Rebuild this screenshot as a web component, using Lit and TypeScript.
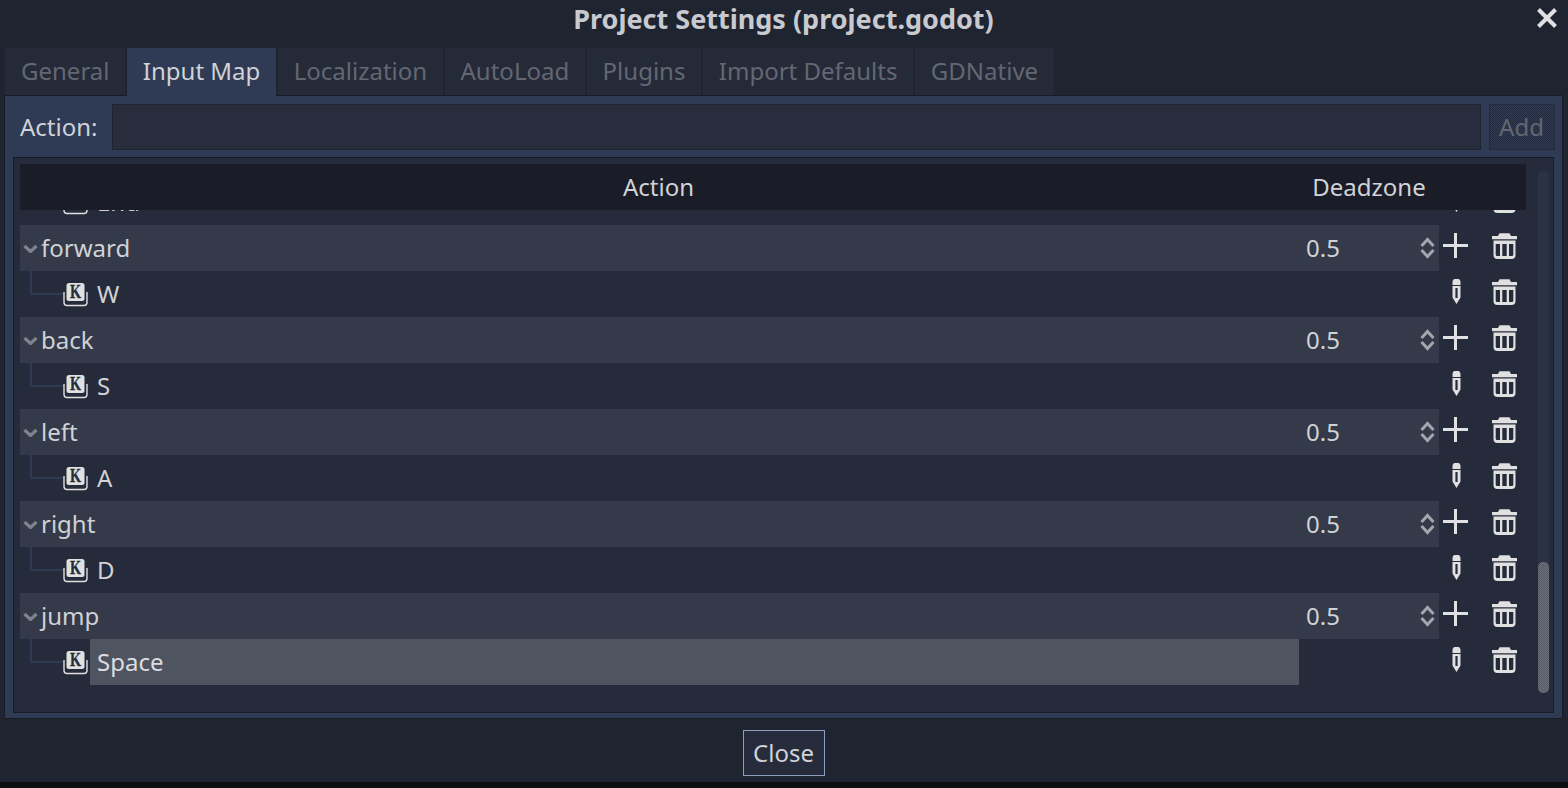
import { LitElement, html, css, svg } from "lit";
import { customElement } from "lit/decorators.js";

const plusIcon = html`<svg class="ico plus" viewBox="0 0 25 25"><path d="M11 0h3v11h11v3H14v11h-3V14H0v-3h11z" fill="#e0e0e0"/></svg>`;
const trashIcon = html`<svg class="ico trash" viewBox="0 0 25 26"><path fill="#e0e0e0" d="M7.500 0.300h10l1.500 2.700h6v3.300H0V3h6zM1.500 7.500h22v14.500a4 4 0 0 1-4 4h-14a4 4 0 0 1-4-4z"/><path fill="#252b3a" d="M3.700 11h4.300v12H5.200a1.500 1.500 0 0 1-1.500-1.500zM10.300 11h4.400v12h-4.400zM17 11h4.300v10.500a1.500 1.500 0 0 1-1.500 1.500H17z"/></svg>`;
const pencilIcon = html`<svg class="ico pencil" viewBox="0 0 9 25"><path fill="#e0e0e0" d="M0.500 3a3.500 3 0 0 1 8 0v3h-8zM0.500 7h8v11.500L4.500 25l-4-6.500z"/><rect x="3.400" y="9" width="2.200" height="10" fill="#252b3a"/></svg>`;
const keyIcon = html`<svg class="ico key" viewBox="0 0 25 24"><path fill="none" stroke="#e0e0e0" stroke-width="1.400" d="M1 9v10.500a3 3 0 0 0 3 3h17a3 3 0 0 0 3-3V9"/><rect x="3.500" y="0" width="18" height="18" rx="2.500" fill="#e0e0e0"/>${svg`<text x="12.500" y="15.200" text-anchor="middle" font-family="'Liberation Serif', serif" font-weight="700" font-size="18.500" textLength="11" lengthAdjust="spacingAndGlyphs" stroke="#252b3a" stroke-width="0.300" fill="#252b3a">K</text>`}</svg>`;
const chevron = html`<svg class="chev" viewBox="0 -1 15 9"><path d="M1.500 1 7.500 6.500l6-5.500" fill="none" stroke="#7f838d" stroke-width="3.200"/></svg>`;
const spinner = html`<svg class="spin" viewBox="0 0 15 22"><path d="M1.500 9 7.500 2.500 13.500 9M1.500 13l6 6.500 6-6.500" fill="none" stroke="#a3a6ad" stroke-width="3"/></svg>`;

type Row = { name: string; key: string; selected?: boolean };
const rows: Row[] = [
  { name: "forward", key: "W" },
  { name: "back", key: "S" },
  { name: "left", key: "A" },
  { name: "right", key: "D" },
  { name: "jump", key: "Space", selected: true },
];
const tabs = ["General", "Input Map", "Localization", "AutoLoad", "Plugins", "Import Defaults", "GDNative"];

@customElement("app-root")
export class AppRoot extends LitElement {
  static styles = css`
    :host {
      display: flex;
      flex-direction: column;
      width: 1568px;
      height: 788px;
      overflow: hidden;
      background: #1f2431;
      color: #d0d2d6;
      font-family: "Noto Sans", sans-serif;
      font-size: 24px;
      line-height: 46px;
    }
    .title {
      position: relative;
      height: 48px;
      flex: none;
      display: flex;
      align-items: center;
      justify-content: center;
      line-height: 40px;
      font-size: 27px;
      font-weight: 700;
      color: #c8cad0;
      padding-bottom: 10px;
      padding-right: 1px;
      box-sizing: border-box;
    }
    .x {
      position: absolute;
      left: 1537px;
      top: 8px;
      width: 20px;
      height: 20px;
    }
    .tabs {
      flex: none;
      display: flex;
      height: 47px;
      padding-left: 5px;
      gap: 1.400px;
      position: relative;
      z-index: 1;
    }
    .tab {
      padding: 0 16px;
      height: 47px;
      line-height: 45px;
      box-sizing: border-box;
      background: #252a39;
      color: #636771;
      box-shadow: 0 -1px 0 #1f2431, 0 1px 0 #191c26;
    }
    .tab.on {
      background: #2f3a54;
      color: #d0d2d6;
      height: 48px;
      box-shadow: none;
    }
    .panel {
      flex: none;
      height: 624px;
      margin: 0 4px;
      width: 1559px;
      box-sizing: border-box;
      border: 1px solid #191c26;
      background: #2f3a54;
      padding: 8px 7px 5px 8px;
      display: flex;
      flex-direction: column;
      gap: 7px;
    }
    .bar {
      display: flex;
      height: 46px;
      flex: none;
    }
    .lbl {
      width: 99px;
      padding-left: 7px;
      box-sizing: border-box;
    }
    .input {
      width: 1369px;
      box-sizing: border-box;
      background: #272d3c;
      border: 1px solid #20242f;
    }
    .add {
      margin-left: 8px;
      width: 66px;
      box-sizing: border-box;
      text-align: center;
      line-height: 44px;
      padding-right: 1px;
      color: #636771;
      border: 1px solid #242a3a;
      background: repeating-conic-gradient(#252b3c 0 25%, #2f3a54 0 50%) 0 0 / 2px 2px;
    }
    .tree {
      flex: 1;
      margin-right: 1px;
      box-sizing: border-box;
      background: #252b3a;
      border: 1px solid #191c26;
      padding: 6px 4px 6px 6px;
      display: flex;
      gap: 12px;
      min-height: 0;
    }
    .main {
      width: 1506px;
      display: flex;
      flex-direction: column;
      min-height: 0;
    }
    .head,
    .row {
      display: grid;
      grid-template-columns: 1279px 140px 87px;
      height: 46px;
      flex: none;
    }
    .head {
      background: #1a1d28;
      text-align: center;
    }
    .head .first {
      padding-right: 2px;
    }
    .rows {
      flex: 1;
      overflow: hidden;
      min-height: 0;
    }
    .list {
      margin-top: -31px;
    }
    .cell {
      display: flex;
      align-items: center;
      position: relative;
      min-width: 0;
    }
    .row.parent .cell.a,
    .row.parent .cell.b {
      background: #343a4a;
    }
    .cell.a {
      padding-left: 3px;
      gap: 3px;
    }
    .row.child .cell.a {
      padding-left: 43px;
      gap: 4px;
    }
    .cell.b {
      padding-left: 7px;
      justify-content: space-between;
      padding-right: 4px;
      box-sizing: border-box;
    }
    .cell.c {
      display: block;
    }
    .chev {
      width: 15px;
      height: 9px;
      flex: none;
    }
    .spin {
      width: 15px;
      height: 22px;
      flex: none;
    }
    .ico {
      display: block;
      flex: none;
    }
    .key {
      width: 25px;
      height: 24px;
      margin-top: 2px;
      margin-right: -4px;
    }
    .plus {
      width: 25px;
      height: 25px;
    }
    .trash {
      width: 25px;
      height: 26px;
    }
    .pencil {
      width: 9px;
      height: 25px;
    }
    .btns {
      position: absolute;
      left: 0;
      top: 0;
      width: 87px;
      height: 46px;
    }
    .btns > * {
      position: absolute;
      top: 8px;
    }
    .btns .left {
      left: 4px;
    }
    .btns .pencil {
      left: 12.500px;
    }
    .btns .trash {
      left: 53px;
    }
    .line {
      position: absolute;
      left: 10px;
      top: 0;
      width: 33px;
      height: 24px;
      box-sizing: border-box;
      border-left: 2px solid #2f3a54;
      border-bottom: 2px solid #2f3a54;
    }
    .txt {
      padding-left: 9px;
      height: 46px;
      flex: 1;
    }
    .txt.sel {
      background: #4f5560;
      margin-left: 2px;
      padding-left: 7px;
      color: #dcdde0;
    }
    .sb {
      width: 11px;
      margin-top: 7px;
      margin-bottom: 13px;
      border-radius: 5px;
      background: #2b3242;
      display: flex;
      flex-direction: column;
      justify-content: flex-end;
    }
    .grab {
      height: 131px;
      border-radius: 5px;
      background: repeating-conic-gradient(#6a6e78 0 25%, #585c67 0 50%) 0 0 / 2px 2px;
    }
    .foot {
      flex: 1;
      display: flex;
      justify-content: center;
      padding-top: 11px;
      box-sizing: border-box;
    }
    .close {
      width: 82px;
      height: 46px;
      box-sizing: border-box;
      border: 1px solid #8c9dbd;
      background: #262c3b;
      line-height: 44px;
      text-align: center;
      padding-right: 1px;
    }
    .strip {
      flex: none;
      height: 6px;
      background: #0c0d11;
    }
  `;

  private child(key: string, selected = false) {
    return html`<div class="row child">
      <div class="cell a">
        <span class="line"></span>
        ${keyIcon}
        <div class="txt ${selected ? "sel" : ""}">${key}</div>
      </div>
      <div class="cell b"></div>
      <div class="cell c"><div class="btns">${pencilIcon}${trashIcon}</div></div>
    </div>`;
  }

  render() {
    return html`
      <div class="title">
        Project Settings (project.godot)
        <svg class="x" viewBox="0 0 20 20"><path d="M1.500 1.500l17 17M18.500 1.500l-17 17" stroke="#e0e0e0" stroke-width="4" fill="none"/></svg>
      </div>
      <div class="tabs">
        ${tabs.map((t) => html`<div class="tab ${t === "Input Map" ? "on" : ""}">${t}</div>`)}
      </div>
      <div class="panel">
        <div class="bar">
          <div class="lbl">Action:</div>
          <div class="input"></div>
          <div class="add">Add</div>
        </div>
        <div class="tree">
          <div class="main">
            <div class="head"><div class="first">Action</div><div>Deadzone</div><div></div></div>
            <div class="rows">
              <div class="list">
                ${this.child("End")}
                ${rows.map(
                  (r) => html`
                    <div class="row parent">
                      <div class="cell a">${chevron}<span>${r.name}</span></div>
                      <div class="cell b"><span>0.5</span>${spinner}</div>
                      <div class="cell c">
                        <div class="btns"><span class="left">${plusIcon}</span>${trashIcon}</div>
                      </div>
                    </div>
                    ${this.child(r.key, r.selected)}
                  `
                )}
              </div>
            </div>
          </div>
          <div class="sb"><div class="grab"></div></div>
        </div>
      </div>
      <div class="foot"><div class="close">Close</div></div>
      <div class="strip"></div>
    `;
  }
}
